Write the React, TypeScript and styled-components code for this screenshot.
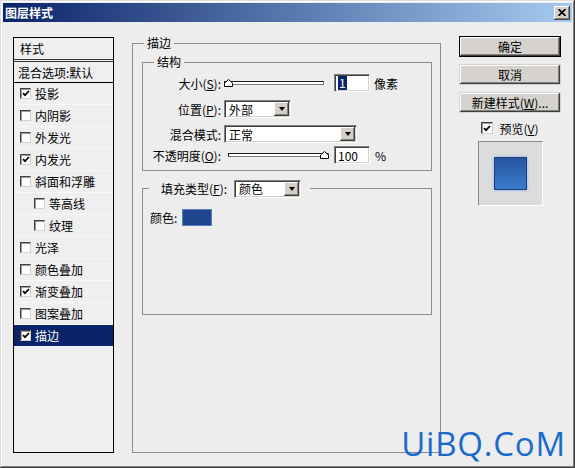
import React from "react";
import styled, { createGlobalStyle } from "styled-components";

const GlobalStyle = createGlobalStyle`
  html, body { margin: 0; padding: 0; }
  body {
    background: #ededed;
    font-family: "Noto Sans CJK SC", "Noto Sans", sans-serif;
    font-size: 12px;
    color: #000;
  }
  * { box-sizing: border-box; }
`;

const Window = styled.div`
  position: relative;
  width: 575px;
  height: 468px;
  padding: 3px;
  display: flex;
  flex-direction: column;
  background: #ededed;
  overflow: hidden;
  box-shadow: inset -1px -1px 0 #404040, inset 1px 1px 0 #dcdcdc,
    inset -2px -2px 0 #808080, inset 2px 2px 0 #fff;
`;

const TitleBar = styled.div`
  height: 19px;
  padding: 0 2px 0 2px;
  display: flex;
  align-items: center;
  justify-content: space-between;
  background: linear-gradient(to right, #0a246a, #a6caf0);
  color: #fff;
  font-weight: bold;
  font-size: 12px;
  line-height: 19px;
`;

const CloseButton = styled.div`
  width: 16px;
  height: 14px;
  display: flex;
  align-items: center;
  justify-content: center;
  background: #d4d0c8;
  box-shadow: inset -1px -1px 0 #404040, inset 1px 1px 0 #fff,
    inset -2px -2px 0 #808080;
`;

const Body = styled.div`
  flex: 1;
  display: flex;
  padding: 14px 0 0 10px;
`;

/* ---------- style list ---------- */

const List = styled.div`
  width: 101px;
  height: 416px;
  margin-top: 1px;
  border: 1px solid #000;
  background: #efefef;
  display: flex;
  flex-direction: column;
`;

const ListHeader = styled.div`
  height: 24px;
  padding-left: 6px;
  display: flex;
  align-items: center;
  border-bottom: 3px double #333;
`;

const ListBlend = styled.div`
  height: 21px;
  padding-left: 4px;
  display: flex;
  align-items: center;
  border-bottom: 1px solid #000;
`;

const ListItem = styled.div<{ $indent?: boolean; $selected?: boolean }>`
  height: 22px;
  padding-left: ${p => (p.$indent ? 20 : 6)}px;
  display: flex;
  align-items: center;
  gap: 4px;
  border-bottom: 1px solid #f7f7f7;
  background: ${p => (p.$selected ? "#0a246a" : "transparent")};
  color: ${p => (p.$selected ? "#fff" : "#000")};
`;

const Box = styled.span<{ $size?: number }>`
  width: ${p => p.$size ?? 11}px;
  height: ${p => p.$size ?? 11}px;
  flex: none;
  display: inline-flex;
  align-items: center;
  justify-content: center;
  background: #fff;
  border: 1px solid;
  border-color: #404040 #d4d0c8 #d4d0c8 #404040;
  box-shadow: inset 1px 1px 0 #9a9a9a;
`;

const Check = ({ on, size }: { on: boolean; size?: number }) => (
  <Box $size={size}>
    {on && (
      <svg width="8" height="7" viewBox="0 0 8 7">
        <path d="M1 3.2 L3 5.2 L7 1" fill="none" stroke="#000" strokeWidth="1.7" />
      </svg>
    )}
  </Box>
);

/* ---------- group boxes ---------- */

const Group = styled.fieldset<{ $w: number; $h: number; $ml?: number }>`
  margin: 0 0 0 ${p => p.$ml ?? 0}px;
  padding: 0;
  min-width: 0;
  width: ${p => p.$w}px;
  height: ${p => p.$h}px;
  border: 1px solid #8c8c8c;
`;

const Legend = styled.legend`
  margin-left: 11px;
  padding: 0 3px;
  line-height: 14px;
  font-size: 12px;
`;

const FillLegend = styled.legend`
  margin-left: 6px;
  padding: 0 9px 0 12px;
  display: flex;
  align-items: center;
  gap: 7px;
  line-height: 19px;
`;

const GroupInner = styled.div`
  padding: 5px 8px 0 9px;
  display: flex;
  flex-direction: column;
  gap: 8px;
`;

const Form = styled.div`
  padding-top: 1px;
  display: grid;
  grid-template-columns: 78px auto;
  grid-template-rows: 26px 26px 24px 18px;
  column-gap: 3px;
  align-items: center;
`;

const Label = styled.div`
  text-align: right;
  white-space: nowrap;
`;

const Controls = styled.div`
  display: flex;
  align-items: center;
`;

const Slider = styled.div<{ $w: number; $ml?: number }>`
  position: relative;
  width: ${p => p.$w}px;
  height: 10px;
  margin-left: ${p => p.$ml ?? 0}px;
  display: flex;
  align-items: center;
`;

const Track = styled.div`
  width: 100%;
  height: 4px;
  background: #fff;
  border: 1px solid #1a1a1a;
  border-bottom-color: #7a7a7a;
  border-right-color: #7a7a7a;
`;

const Thumb = styled.svg<{ $at: number }>`
  position: absolute;
  top: 1px;
  left: calc(${p => p.$at} * (100% - 9px));
`;

const Sunken = styled.div<{ $w: number }>`
  width: ${p => p.$w}px;
  height: 18px;
  display: flex;
  align-items: center;
  background: #fff;
  border: 1px solid;
  border-color: #808080 #fff #fff #808080;
  box-shadow: inset 1px 1px 0 #404040, inset -1px -1px 0 #d4d0c8;
`;

const Input = styled(Sunken)<{ $ml?: number }>`
  margin-left: ${p => p.$ml ?? 0}px;
  padding-left: 3px;
`;

const Selected = styled.span`
  background: #0a246a;
  color: #fff;
  line-height: 14px;
  padding: 0 1px;
`;

const SelectText = styled.span`
  flex: 1;
  padding-left: 4px;
`;

const ArrowButton = styled.span`
  width: 15px;
  height: 14px;
  margin-right: 1px;
  display: flex;
  align-items: center;
  justify-content: center;
  background: #d4d0c8;
  box-shadow: inset -1px -1px 0 #404040, inset 1px 1px 0 #fff,
    inset -2px -2px 0 #808080;
  &::after {
    content: "";
    border-left: 3.5px solid transparent;
    border-right: 3.5px solid transparent;
    border-top: 4px solid #000;
  }
`;

const Unit = styled.span<{ $ml: number }>`
  margin-left: ${p => p.$ml}px;
`;

const Select = ({ w, value }: { w: number; value: string }) => (
  <Sunken $w={w}>
    <SelectText>{value}</SelectText>
    <ArrowButton />
  </Sunken>
);

const ThumbIcon = ({ at }: { at: number }) => (
  <Thumb $at={at} width="9" height="8" viewBox="0 0 9 8">
    <path d="M0.5 7.5 V4 L4.5 0.5 L8.5 4 V7.5 Z" fill="#fff" stroke="#000" />
  </Thumb>
);

const FillRow = styled.div`
  padding: 11px 0 0 7px;
  display: flex;
  align-items: center;
  gap: 5px;
`;

const Swatch = styled.div`
  width: 30px;
  height: 17px;
  background: #1d468f;
  border: 1px solid #5c7fb8;
`;

/* ---------- right column ---------- */

const Side = styled.div`
  width: 102px;
  margin-left: 18px;
  display: flex;
  flex-direction: column;
  align-items: center;
`;

const Button = styled.div<{ $default?: boolean }>`
  width: 102px;
  height: 21px;
  margin-bottom: 7px;
  display: flex;
  align-items: center;
  justify-content: center;
  background: #d6d3ce;
  border: 1px solid ${p => (p.$default ? "#000" : "transparent")};
  box-shadow: inset -1px -1px 0 #404040, inset 1px 1px 0 #fff,
    inset -2px -2px 0 #808080;
`;

const PreviewToggle = styled.div`
  margin-top: 1px;
  display: flex;
  align-items: center;
  gap: 6px;
  height: 14px;
`;

const PreviewFrame = styled.div`
  width: 65px;
  height: 65px;
  margin-top: 6px;
  display: flex;
  align-items: center;
  justify-content: center;
  background: #dcdcdc;
  border: 1px solid;
  border-color: #8a8a8a #fff #fff #8a8a8a;
`;

const PreviewSquare = styled.div`
  width: 33px;
  height: 33px;
  border: 1px solid #1c3f7c;
  background: linear-gradient(to bottom, #2755a0, #3b7ccc);
  box-shadow: 0 0 3px #7fb0ec;
`;

const Watermark = styled.div`
  position: absolute;
  right: 9px;
  bottom: 6px;
  font-family: "Open Sans", "Noto Sans", sans-serif;
  font-size: 33px;
  line-height: 36px;
  letter-spacing: 0.8px;
  color: #1a6acb;
`;

const effects: { name: string; on: boolean; indent?: boolean; selected?: boolean }[] = [
  { name: "投影", on: true },
  { name: "内阴影", on: false },
  { name: "外发光", on: false },
  { name: "内发光", on: true },
  { name: "斜面和浮雕", on: false },
  { name: "等高线", on: false, indent: true },
  { name: "纹理", on: false, indent: true },
  { name: "光泽", on: false },
  { name: "颜色叠加", on: false },
  { name: "渐变叠加", on: true },
  { name: "图案叠加", on: false },
  { name: "描边", on: true, selected: true },
];

export default function App() {
  return (
    <>
      <GlobalStyle />
      <Window>
        <TitleBar>
          <span>图层样式</span>
          <CloseButton>
            <svg width="8" height="7" viewBox="0 0 8 7">
              <path d="M0.5 0 L7.5 7 M7.5 0 L0.5 7" stroke="#000" strokeWidth="1.6" />
            </svg>
          </CloseButton>
        </TitleBar>
        <Body>
          <List>
            <ListHeader>样式</ListHeader>
            <ListBlend>混合选项:默认</ListBlend>
            {effects.map(e => (
              <ListItem key={e.name} $indent={e.indent} $selected={e.selected}>
                <Check on={e.on} />
                <span>{e.name}</span>
              </ListItem>
            ))}
          </List>

          <Group $w={309} $h={417} $ml={18}>
            <Legend>描边</Legend>
            <GroupInner>
              <Group $w={290} $h={116}>
                <Legend>结构</Legend>
                <Form>
                  <Label>大小(<u>S</u>):</Label>
                  <Controls>
                    <Slider $w={100}>
                      <Track />
                      <ThumbIcon at={0} />
                    </Slider>
                    <Input $w={36} $ml={10}>
                      <Selected>1</Selected>
                    </Input>
                    <Unit $ml={4}>像素</Unit>
                  </Controls>

                  <Label>位置(<u>P</u>):</Label>
                  <Controls>
                    <Select w={67} value="外部" />
                  </Controls>

                  <Label>混合模式:</Label>
                  <Controls>
                    <Select w={133} value="正常" />
                  </Controls>

                  <Label>不透明度(<u>O</u>):</Label>
                  <Controls>
                    <Slider $w={101} $ml={4}>
                      <Track />
                      <ThumbIcon at={1} />
                    </Slider>
                    <Input $w={36} $ml={5}>100</Input>
                    <Unit $ml={5}>%</Unit>
                  </Controls>
                </Form>
              </Group>

              <Group $w={290} $h={136}>
                <FillLegend>
                  <span>填充类型(<u>F</u>):</span>
                  <Select w={67} value="颜色" />
                </FillLegend>
                <FillRow>
                  <span>颜色:</span>
                  <Swatch />
                </FillRow>
              </Group>
            </GroupInner>
          </Group>

          <Side>
            <Button $default>确定</Button>
            <Button>取消</Button>
            <Button>新建样式(<u>W</u>)...</Button>
            <PreviewToggle>
              <Check on size={12} />
              <span>预览(<u>V</u>)</span>
            </PreviewToggle>
            <PreviewFrame>
              <PreviewSquare />
            </PreviewFrame>
          </Side>
        </Body>
        <Watermark>UiBQ.CoM</Watermark>
      </Window>
    </>
  );
}
